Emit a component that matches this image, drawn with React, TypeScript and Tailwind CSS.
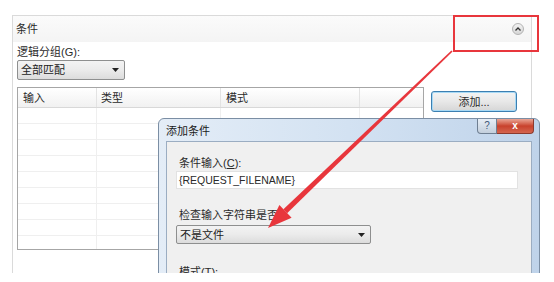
import React from 'react';

const FONT = { fontFamily: '"Liberation Sans", "Noto Sans CJK SC", sans-serif' };

function Dropdown({ label, width }: { label: string; width: string }) {
  return (
    <div
      className={`${width} h-full flex items-center justify-between pl-[3px] pr-[5px] border border-[#8e8f8f] rounded-[2px] bg-gradient-to-b from-[#f3f3f3] via-[#ebebeb] to-[#dcdcdc] text-[#222]`}
    >
      <span>{label}</span>
      <svg width="7" height="4" viewBox="0 0 7 4">
        <path d="M0 0h7L3.5 4z" fill="#222" />
      </svg>
    </div>
  );
}

export default function App() {
  const rows = Array.from({ length: 9 });

  return (
    <div className="w-[554px] h-[282px] bg-white relative overflow-hidden text-[11px] leading-[14px] text-[#2a2a2a]" style={FONT}>
      <div className="h-[273px] overflow-hidden relative pt-[15px] pl-[12px]">
        {/* Conditions panel */}
        <div className="w-[520px] h-[270px] border-l border-t border-r border-[#dadada]">
          <div className="h-[26px] flex items-center justify-between pl-[3px] pr-[7px] bg-gradient-to-b from-[#fbfbfb] to-[#f4f4f4]">
            <span>条件</span>
            <div className="w-[12px] h-[12px] rounded-full border border-[#b3b3b3] bg-gradient-to-b from-[#f2f2f2] to-[#d6d6d6] flex items-center justify-center">
              <svg width="6" height="4" viewBox="0 0 6 4">
                <path d="M0.5 3.5L3 1 5.5 3.5" stroke="#333" strokeWidth="1.3" fill="none" />
              </svg>
            </div>
          </div>

          <div className="pl-[4px]">
            <div className="mt-[3px]">逻辑分组(G):</div>
            <div className="mt-[1px] h-[20px]">
              <Dropdown label="全部匹配" width="w-[108px]" />
            </div>

            <div className="mt-[7px] flex items-start">
              {/* Conditions table */}
              <div className="w-[407px] h-[163px] border border-[#a6a6a6] overflow-hidden bg-white">
                <div className="h-[20px] flex bg-gradient-to-b from-[#ffffff] to-[#f1f1f1] border-b border-[#d8d8d8]">
                  <div className="w-[79px] border-r border-[#e3e3e3] pl-[5px] flex items-center">输入</div>
                  <div className="w-[124px] border-r border-[#e3e3e3] pl-[4px] flex items-center">类型</div>
                  <div className="w-[139px] border-r border-[#e3e3e3] pl-[5px] flex items-center">模式</div>
                  <div className="flex-1" />
                </div>
                {rows.map((_, i) => (
                  <div key={i} className="h-[16px] flex border-b border-[#efefef]">
                    <div className="w-[79px] border-r border-[#efefef]" />
                    <div className="w-[124px] border-r border-[#efefef]" />
                    <div className="w-[139px] border-r border-[#efefef]" />
                    <div className="flex-1" />
                  </div>
                ))}
              </div>

              <div className="ml-[7px] mt-[4px] w-[86px] h-[21px] flex items-center justify-center rounded-[3px] border border-[#3c7fb1] bg-gradient-to-b from-[#f4f4f4] via-[#e8e8e8] to-[#d6d6d6] shadow-[inset_0_0_0_1px_#a7d9f5]">
                添加...
              </div>
            </div>
          </div>
        </div>

        {/* Add condition dialog */}
        <div className="absolute left-[158px] top-[118px] w-[382px] h-[170px] rounded-t-[6px] border border-[#7b8ea4] bg-gradient-to-r from-[#e4edf7] via-[#d3e2f2] to-[#bfd3ea] px-[7px] flex flex-col">
          <div className="h-[22px] flex items-start">
            <span className="mt-[5px] text-[#1a1a1a]">添加条件</span>
            <div className="ml-auto mr-[-2px] flex">
              <div className="w-[20px] h-[15px] border border-[#6f7f92] border-t-0 rounded-bl-[4px] bg-gradient-to-b from-[#e7eef6] to-[#c3cfdc] flex items-center justify-center text-[10px] text-[#3e5a7a]">
                ?
              </div>
              <div className="w-[37px] h-[15px] border border-[#8c3a2e] border-t-0 border-l-0 rounded-br-[4px] bg-gradient-to-b from-[#e9a596] via-[#c8412c] to-[#d4654f] flex items-center justify-center text-[10px] font-bold text-white">
                x
              </div>
            </div>
          </div>

          <div className="flex-1 border border-[#9badc2] bg-[#f0f0f0] pl-[9px] pr-[13px]">
            <div className="mt-[14px] ml-[3px]">
              条件输入(<span className="underline">C</span>):
            </div>
            <div className="mt-[1px] h-[18px] bg-white border border-[#e2e2e2] flex items-center pl-[2px] text-[10.5px]">
              {'{REQUEST_FILENAME}'}
            </div>
            <div className="mt-[19px] ml-[3px]">检查输入字符串是否:</div>
            <div className="mt-[3px] h-[19px]">
              <Dropdown label="不是文件" width="w-[195px]" />
            </div>
            <div className="mt-[21px] ml-[3px]">
              模式(<span className="underline">T</span>):
            </div>
          </div>
        </div>

        {/* Red annotation */}
        <div className="absolute left-[453px] top-[15px] w-[86px] h-[37px] border-2 border-[#e8363c]" />
        <svg className="absolute left-0 top-0" width="554" height="273" viewBox="0 0 554 273">
          <polygon points="452.6,51.6 451.4,50.4 283.4,209.3 287.1,213.2" fill="#e8363c" />
          <polygon points="268,228 279.4,204.9 291.6,217.7" fill="#e8363c" />
        </svg>
      </div>
    </div>
  );
}
